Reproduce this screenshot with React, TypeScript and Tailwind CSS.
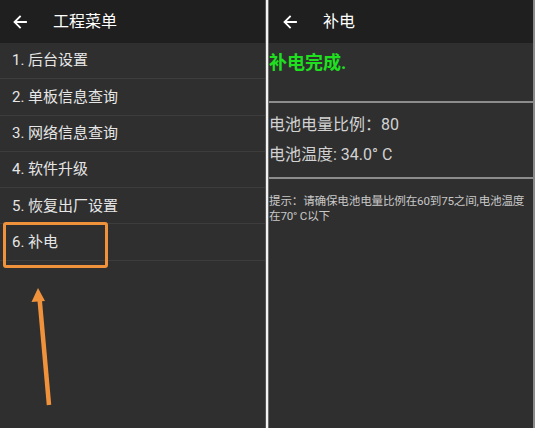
import React from "react";

const font = { fontFamily: 'Roboto, "Noto Sans CJK SC", sans-serif' };

function BackArrow() {
  return (
    <svg width="14" height="14" viewBox="0 0 14 14" fill="none">
      <path d="M13 7H2M7 1.5L1.5 7L7 12.5" stroke="#ffffff" strokeWidth="1.8" strokeLinecap="square" />
    </svg>
  );
}

const items = ["1. 后台设置", "2. 单板信息查询", "3. 网络信息查询", "4. 软件升级", "5. 恢复出厂设置", "6. 补电"];

export default function App() {
  return (
    <div className="flex w-[535px] h-[428px] bg-[#2f2f2f] overflow-hidden" style={font}>
      {/* Left panel */}
      <div className="relative w-[265px] h-full flex flex-col bg-[#2f2f2f]">
        <div className="h-[43px] flex items-center bg-[#1f1f1f] shrink-0">
          <div className="w-[53px] pl-[13px] flex items-center">
            <BackArrow />
          </div>
          <span className="text-[16px] text-white">工程菜单</span>
        </div>
        {items.map((t) => (
          <div key={t} className="h-[36.3px] flex items-center pl-[12px] border-b border-[#3d3d3d] shrink-0">
            <span className="text-[15px] text-[#e6e6e6]">{t}</span>
          </div>
        ))}
        <div className="absolute left-[3px] top-[222px] w-[105px] h-[46px] border-[3px] border-[#f0923b] rounded-[3px]" />
        <svg className="absolute left-0 top-[280px]" width="70" height="140" viewBox="0 280 70 140">
          <line x1="49" y1="405" x2="39.5" y2="298" stroke="#f0923b" strokeWidth="4.5" />
          <polygon points="38,288 31.5,302 45,301" fill="#f0923b" />
        </svg>
      </div>
      {/* Divider */}
      <div className="w-[1px] h-full bg-[#555555]" />
      <div className="w-[2px] h-full bg-[#f2f2f2]" />
      <div className="w-[1px] h-full bg-[#6a6a6a]" />
      {/* Right panel */}
      <div className="w-[264px] h-full flex flex-col bg-[#2f2f2f]">
        <div className="h-[43px] flex items-center bg-[#1f1f1f] shrink-0">
          <div className="w-[54px] pl-[14px] flex items-center">
            <BackArrow />
          </div>
          <span className="text-[16px] text-white">补电</span>
        </div>
        <div className="h-[58px] pt-[7px] shrink-0">
          <span className="text-[18px] font-bold text-[#1fe01f] leading-[26px]">补电完成.</span>
        </div>
        <div className="h-[2px] bg-[#8c8c8c] shrink-0" />
        <div className="h-[74px] flex flex-col justify-center gap-[8px] shrink-0">
          <div className="text-[16px] text-[#d2d2d2] leading-[22px]">电池电量比例：80</div>
          <div className="text-[16px] text-[#d2d2d2] leading-[22px]">电池温度: 34.0° C</div>
        </div>
        <div className="h-[2px] bg-[#8c8c8c] shrink-0" />
        <div className="pt-[15px] text-[11.6px] leading-[15px] text-[#c8c8c8] tracking-[-0.2px]">
          <div className="whitespace-nowrap">提示：请确保电池电量比例在60到75之间,电池温度</div>
          <div className="whitespace-nowrap">在70° C以下</div>
        </div>
      </div>
      <div className="w-[2px] h-full bg-[#8a8a8a]" />
    </div>
  );
}
